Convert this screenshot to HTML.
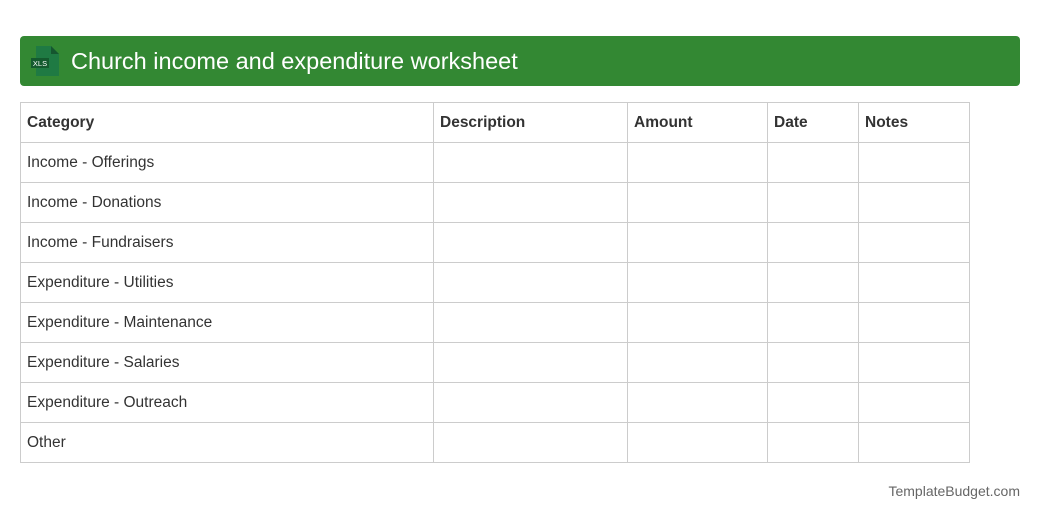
<!DOCTYPE html>
<html><head><style>
body{margin:0;width:1040px;height:520px;background:#fff;font-family:"Liberation Sans",Arial,sans-serif;position:relative;overflow:hidden}
.bar{position:absolute;left:20px;top:36px;width:1000px;height:50px;background:#338833;border-radius:4px}
.bar .t{position:absolute;left:51px;top:12px;font-size:23.5px;color:#fff}
table{position:absolute;left:20px;top:102px;border-collapse:collapse}
tr{height:40px}
td{border:1px solid #ccc;height:39px;padding:0 0 0 6px;font-size:15.5px;color:#333;box-sizing:border-box;line-height:18px}
tr:first-child td{font-weight:bold}
.f{position:absolute;right:20px;top:483px;font-size:14px;color:#666}
</style></head><body>
<div class="bar">
<svg style="position:absolute;left:10px;top:10px" width="30" height="31" viewBox="0 0 30 31">
<path d="M6 0H21L29 8V30H6Z" fill="#1f7a43"/>
<path d="M21 0V8H29Z" fill="#15562f"/>
<rect x="1" y="12" width="18" height="10" fill="#145a2e"/>
<text x="10" y="20" font-size="7.5" fill="#fff" text-anchor="middle" font-family="Liberation Sans">XLS</text>
</svg>
<div class="t">Church income and expenditure worksheet</div>
</div>
<table>
<colgroup><col style="width:413px"><col style="width:194px"><col style="width:140px"><col style="width:91px"><col style="width:111px"></colgroup>
<tr><td>Category</td><td>Description</td><td>Amount</td><td>Date</td><td>Notes</td></tr>
<tr><td>Income - Offerings</td><td></td><td></td><td></td><td></td></tr>
<tr><td>Income - Donations</td><td></td><td></td><td></td><td></td></tr>
<tr><td>Income - Fundraisers</td><td></td><td></td><td></td><td></td></tr>
<tr><td>Expenditure - Utilities</td><td></td><td></td><td></td><td></td></tr>
<tr><td>Expenditure - Maintenance</td><td></td><td></td><td></td><td></td></tr>
<tr><td>Expenditure - Salaries</td><td></td><td></td><td></td><td></td></tr>
<tr><td>Expenditure - Outreach</td><td></td><td></td><td></td><td></td></tr>
<tr><td>Other</td><td></td><td></td><td></td><td></td></tr>
</table>
<div class="f">TemplateBudget.com</div>
</body></html>
